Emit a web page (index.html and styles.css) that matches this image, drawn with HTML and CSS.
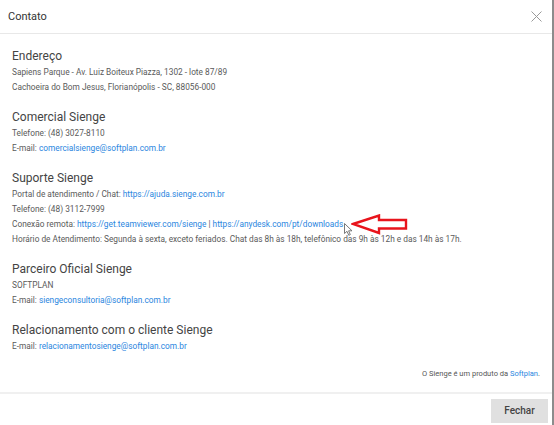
FILE: index.html
```html
<!DOCTYPE html>
<html lang="pt-BR">
<head>
<meta charset="utf-8">
<title>Contato</title>
<link rel="stylesheet" href="styles.css">
</head>
<body>
<div class="dialog">
  <header class="dialog-header">
    <h1 class="dialog-title">Contato</h1>
    <button class="close-btn" aria-label="Fechar">
      <svg width="11" height="11" viewBox="0 0 11 11"><path d="M0.5 0.5L10.5 10.5M10.5 0.5L0.5 10.5" stroke="#9a9a9a" stroke-width="1" fill="none"/></svg>
    </button>
  </header>
  <main class="dialog-body">
    <section class="block">
      <h2 class="block-title">Endereço</h2>
      <p class="line">Sapiens Parque - Av. Luiz Boiteux Piazza, 1302 - lote 87/89</p>
      <p class="line">Cachoeira do Bom Jesus, Florianópolis - SC, 88056-000</p>
    </section>
    <section class="block">
      <h2 class="block-title">Comercial Sienge</h2>
      <p class="line">Telefone: (48) 3027-8110</p>
      <p class="line">E-mail: <a class="link" href="#">comercialsienge@softplan.com.br</a></p>
    </section>
    <section class="block">
      <h2 class="block-title">Suporte Sienge</h2>
      <p class="line">Portal de atendimento / Chat: <a class="link" href="#">https://ajuda.sienge.com.br</a></p>
      <p class="line">Telefone: (48) 3112-7999</p>
      <p class="line">Conexão remota: <a class="link" href="#">https://get.teamviewer.com/sienge</a> | <a class="link" href="#">https://anydesk.com/pt/downloads</a><span class="annot">
        <svg class="arrow" width="58" height="22" viewBox="0 0 58 22"><path d="M2 10L28 1.5V6H55V14.5H28V19Z" fill="none" stroke="#e8141c" stroke-width="2.4" stroke-linejoin="miter"/></svg>
        <svg class="cursor" width="9" height="13" viewBox="0 0 9 13"><path d="M0.5 0.5V10.5L3 8.3L4.8 12.3L6.3 11.6L4.6 7.8H8Z" fill="#fff" stroke="#6a6a6a" stroke-width="0.9"/></svg>
      </span></p>
      <p class="line">Horário de Atendimento: Segunda à sexta, exceto feriados. Chat das 8h às 18h, telefônico das 9h às 12h e das 14h às 17h.</p>
    </section>
    <section class="block">
      <h2 class="block-title">Parceiro Oficial Sienge</h2>
      <p class="line">SOFTPLAN</p>
      <p class="line">E-mail: <a class="link" href="#">siengeconsultoria@softplan.com.br</a></p>
    </section>
    <section class="block">
      <h2 class="block-title">Relacionamento com o cliente Sienge</h2>
      <p class="line">E-mail: <a class="link" href="#">relacionamentosienge@softplan.com.br</a></p>
    </section>
    <p class="credit">O Sienge é um produto da <a class="link" href="#">Softplan</a>.</p>
  </main>
  <footer class="dialog-footer">
    <button class="btn">Fechar</button>
  </footer>
</div>
</body>
</html>
```
FILE: styles.css
```css
* { box-sizing: border-box; }
html, body { margin: 0; padding: 0; }
body {
  background: #8c8c8c;
  font-family: Roboto, "Liberation Sans", Arial, sans-serif;
  width: 554px;
  height: 425px;
  overflow: hidden;
}
.dialog {
  width: 552px;
  height: 425px;
  background: #fff;
  display: flex;
  flex-direction: column;
}
.dialog-header {
  height: 34px;
  border-bottom: 1px solid #e8e8e8;
  display: flex;
  align-items: center;
  justify-content: space-between;
  padding: 0 10px 0 8px;
  flex: none;
}
.dialog-title {
  margin: 0;
  font-size: 11px;
  font-weight: 400;
  color: #333;
}
.close-btn {
  border: 0;
  background: none;
  padding: 0;
  width: 11px;
  height: 11px;
  display: flex;
}
.dialog-body {
  flex: 1;
  padding: 14px 12px 0 12px;
  display: flex;
  flex-direction: column;
}
.block { margin-bottom: 14px; }
.block-title {
  margin: 0 0 1px 0;
  font-size: 12px;
  font-weight: 400;
  color: #444;
  line-height: 16px;
}
.line {
  margin: 0;
  font-size: 8.3px;
  line-height: 15px;
  color: #5a5a5a;
  white-space: nowrap;
}
.link {
  color: #2a86e0;
  text-decoration: none;
}
.annot {
  position: relative;
  display: inline-block;
  width: 0;
  height: 0;
}
.arrow { position: absolute; left: 8px; top: -13px; }
.cursor { position: absolute; left: 1px; top: -4px; }
.credit {
  margin: 0;
  text-align: right;
  font-size: 7.5px;
  line-height: 12px;
  color: #555;
}
.dialog-footer {
  height: 33px;
  border-top: 2px solid #f0f0f0;
  display: flex;
  align-items: center;
  justify-content: flex-end;
  padding: 0 4px 0 0;
  flex: none;
}
.btn {
  width: 57px;
  height: 24px;
  border: 0;
  background: #e0e0e0;
  font-family: Roboto, "Liberation Sans", Arial, sans-serif;
  font-size: 10px;
  font-weight: 500;
  color: #444;
  margin-top: 2px;
}
```
